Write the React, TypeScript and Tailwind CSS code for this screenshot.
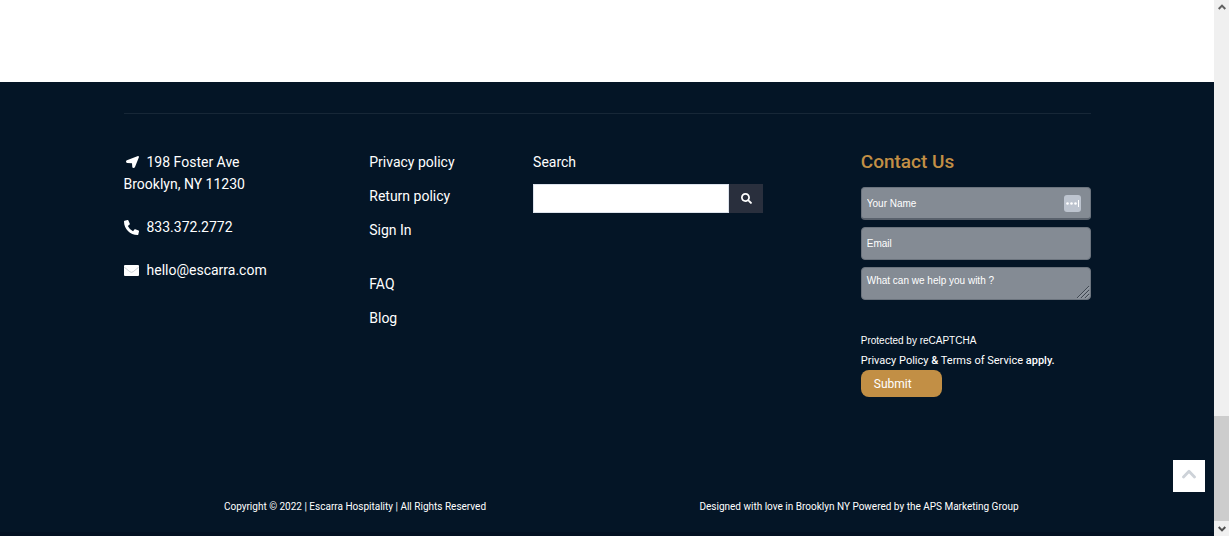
import { FaPhoneAlt, FaSearch } from "react-icons/fa";

const policyLinks = ["Privacy policy", "Return policy", "Sign In"];
const siteLinks = ["FAQ", "Blog"];

const fieldClass =
  "block w-full rounded border border-[#6c747e] bg-[#848b94] px-[5px] font-['Liberation_Sans',sans-serif] text-[10px] text-white placeholder:text-white placeholder:opacity-100 outline-none";

function LocationIcon() {
  return (
    <svg viewBox="0 0 13 12" className="mr-2 ml-0.5 inline-block h-3 w-[13px] align-[-1px]" aria-hidden="true">
      <path d="M12 0Q13.2 0 12.9 1.200L9 11Q8.500 12 7.500 12Q6.400 12 6.300 10.900L6 7.200L1.200 6.900Q0 6.700 0 5.700Q0 4.700.9 4.300Z" fill="#fff" />
    </svg>
  );
}

function EnvelopeIcon() {
  return (
    <svg viewBox="0 0 15 11" className="h-[11px] w-[15px]" aria-hidden="true">
      <rect width="15" height="11" rx="1" fill="#fff" />
      <path d="M.3 2.2 5.8 6.7Q7.5 8 9.2 6.7L14.7 2.2" fill="none" stroke="#b9bec5" strokeWidth=".7" />
    </svg>
  );
}

function ScrollArrow({ className }: { className: string }) {
  return (
    <svg viewBox="0 0 8 6" className={`mx-auto h-1.5 w-2 ${className}`} fill="none" stroke="currentColor" aria-hidden="true">
      <path d="M.7 5 4 1.600 7.300 5" strokeWidth="2" />
    </svg>
  );
}

function LinkList({ links }: { links: string[] }) {
  return (
    <ul className="space-y-3">
      {links.map((link) => (
        <li key={link}>
          <a href="#" className="hover:underline">
            {link}
          </a>
        </li>
      ))}
    </ul>
  );
}

function ContactInfo() {
  return (
    <address className="col-span-3 not-italic">
      <p>
        <LocationIcon />
        198 Foster Ave
        <br />
        Brooklyn, NY 11230
      </p>
      <a href="tel:8333722772" className="mt-[21px] flex items-center gap-2">
        <FaPhoneAlt className="size-[15px]" />
        833.372.2772
      </a>
      <a href="mailto:hello@escarra.com" className="mt-[21px] flex items-center gap-2">
        <EnvelopeIcon />
        hello@escarra.com
      </a>
    </address>
  );
}

function SearchBox() {
  return (
    <form className="col-span-4" onSubmit={(e) => e.preventDefault()}>
      <label htmlFor="search">Search</label>
      <div className="mt-[11px] flex h-[29px] max-w-[230px]">
        <input
          id="search"
          type="text"
          className="min-w-0 flex-1 border border-[#dde3ec] bg-white px-2 text-sm text-black outline-none"
        />
        <button type="submit" aria-label="Search" className="flex w-[34px] items-center justify-center bg-[#292f3d]">
          <FaSearch className="size-[11px]" />
        </button>
      </div>
    </form>
  );
}

function ContactForm() {
  return (
    <form className="col-span-3" onSubmit={(e) => e.preventDefault()}>
      <h2 className="text-[19px] leading-[22px] font-medium text-[#c28f45]">Contact Us</h2>
      <div className="mt-[14px] space-y-[7px]">
        <div className="relative">
          <input type="text" aria-label="Your Name" placeholder="Your Name" className={`${fieldClass} h-[33px] border-b-2 border-b-[#59616c]`} />
          {/* Autofill badge */}
          <svg viewBox="0 0 17 17" className="absolute top-2 right-[10px] size-[17px]" aria-hidden="true">
            <rect width="17" height="17" rx="3" fill="#bdc4cf" />
            <circle cx="3.5" cy="8.5" r="1.300" fill="#fff" />
            <circle cx="7.5" cy="8.5" r="1.300" fill="#fff" />
            <circle cx="11.5" cy="8.5" r="1.300" fill="#fff" />
            <path d="M14.5 5v7" stroke="#fff" />
          </svg>
        </div>
        <input type="email" aria-label="Email" placeholder="Email" className={`${fieldClass} h-[33px]`} />
        <div className="relative">
          <textarea
            aria-label="What can we help you with ?"
            placeholder="What can we help you with ?"
            className={`${fieldClass} h-[33px] resize-none overflow-hidden pt-[5px] leading-4`}
          />
          <svg viewBox="0 0 14 14" className="pointer-events-none absolute right-px bottom-px size-[14px]" aria-hidden="true">
            <path d="M1 13 13 1M5 13l8-8M9 13l4-4" stroke="#404852" />
            <path d="M2 13.5 13.5 2M6 13.5 13.5 6M10 13.5l3.5-3.5" stroke="#b4bac1" strokeWidth=".6" />
          </svg>
        </div>
      </div>
      <p className="mt-[33px] font-['Liberation_Sans',sans-serif] text-[10px] leading-4">Protected by reCAPTCHA</p>
      <p className="mt-1 text-[11px] leading-4 whitespace-nowrap">
        <a href="#">Privacy Policy</a> <span className="font-medium">&amp;</span> <a href="#">Terms of Service</a>{" "}
        <span className="font-medium">apply.</span>
      </p>
      <button type="submit" className="mt-px block h-[27px] w-[81px] rounded-lg bg-[#c28f45] pl-[13px] text-left text-xs">
        Submit
      </button>
    </form>
  );
}

function ScrollRail() {
  return (
    <div className="flex w-[15px] shrink-0 flex-col bg-[#f0f0f0]" aria-hidden="true">
      <ScrollArrow className="mt-1 text-[#606060]" />
      <div className="mt-auto h-[105px] bg-[#cdcdcd]" />
      <ScrollArrow className="mt-[5px] mb-1 rotate-180 text-[#505050]" />
    </div>
  );
}

export default function App() {
  return (
    <div className="flex min-h-screen bg-white font-[Roboto,sans-serif] text-sm leading-[22px] text-white">
      <div className="flex min-w-0 flex-1 flex-col">
        <main className="h-[82px]" />
        <footer className="flex flex-1 flex-col border-b-4 border-[#031122] bg-[#041526]">
          <div className="mx-auto mt-[31px] grid w-full max-w-[967px] grid-cols-12 gap-x-4 border-t border-[#172737] pt-[37px]">
            <ContactInfo />
            <nav className="col-span-2 space-y-8">
              <LinkList links={policyLinks} />
              <LinkList links={siteLinks} />
            </nav>
            <SearchBox />
            <ContactForm />
          </div>
          <div className="mx-auto mt-auto mb-[17px] grid w-full max-w-[1008px] grid-cols-2 text-center text-[10px] leading-4">
            <p>Copyright © 2022 | Escarra Hospitality | All Rights Reserved</p>
            <p>Designed with love in Brooklyn NY Powered by the APS Marketing Group</p>
          </div>
        </footer>
      </div>
      <ScrollRail />
      <button
        type="button"
        aria-label="Back to top"
        onClick={() => window.scrollTo({ top: 0 })}
        className="fixed right-6 bottom-11 flex size-8 items-center justify-center bg-white pb-1 text-[#cdd2d8]"
      >
        <svg viewBox="0 0 14 10" className="h-2.5 w-3.5" fill="none" stroke="currentColor" aria-hidden="true">
          <path d="M1.500 8 7 2.300 12.500 8" strokeWidth="2.800" strokeLinecap="round" strokeLinejoin="round" />
        </svg>
      </button>
    </div>
  );
}
